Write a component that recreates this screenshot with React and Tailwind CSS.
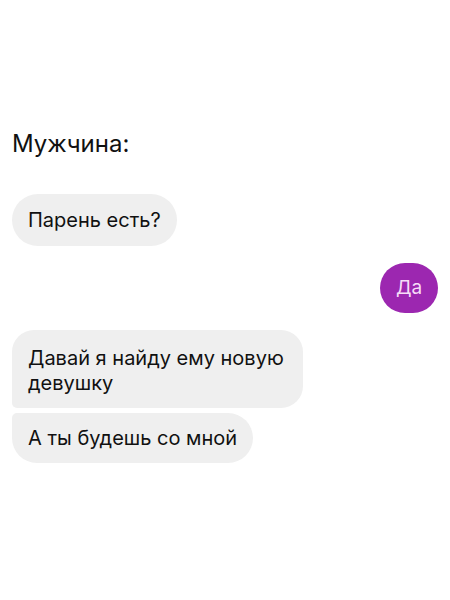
import React from "react";

const Bubble = ({ children, className = "" }) => (
  <div
    className={`bg-[#efefef] text-[#111] text-[20px] leading-[24px] px-4 ${className}`}
  >
    {children}
  </div>
);

export default function App() {
  return (
    <div
      className="w-[450px] h-[600px] bg-white flex flex-col px-3 pt-[128px]"
      style={{ fontFamily: 'Inter, "Liberation Sans", Arial, sans-serif' }}
    >
      {/* Title */}
      <div className="text-[24px] leading-[32px] text-[#111]">Мужчина:</div>

      {/* Incoming */}
      <Bubble className="mt-[34px] w-fit py-[14px] rounded-[26px]">
        Парень есть?
      </Bubble>

      {/* Outgoing */}
      <div className="mt-[17px] flex justify-end">
        <div className="w-[58px] h-[50px] rounded-full bg-[#9c27b0] flex items-center justify-center text-[19px] text-[#f6dcf7]">
          Да
        </div>
      </div>

      {/* Incoming group */}
      <div className="mt-[17px] flex flex-col gap-[5px]">
        <Bubble className="w-[291px] pt-[16px] pb-[12px] leading-[25px] rounded-[22px] rounded-bl-[5px]">
          Давай я найду ему новую девушку
        </Bubble>
        <Bubble className="w-fit py-[13px] rounded-[25px] rounded-tl-[5px]">
          А ты будешь со мной
        </Bubble>
      </div>
    </div>
  );
}
